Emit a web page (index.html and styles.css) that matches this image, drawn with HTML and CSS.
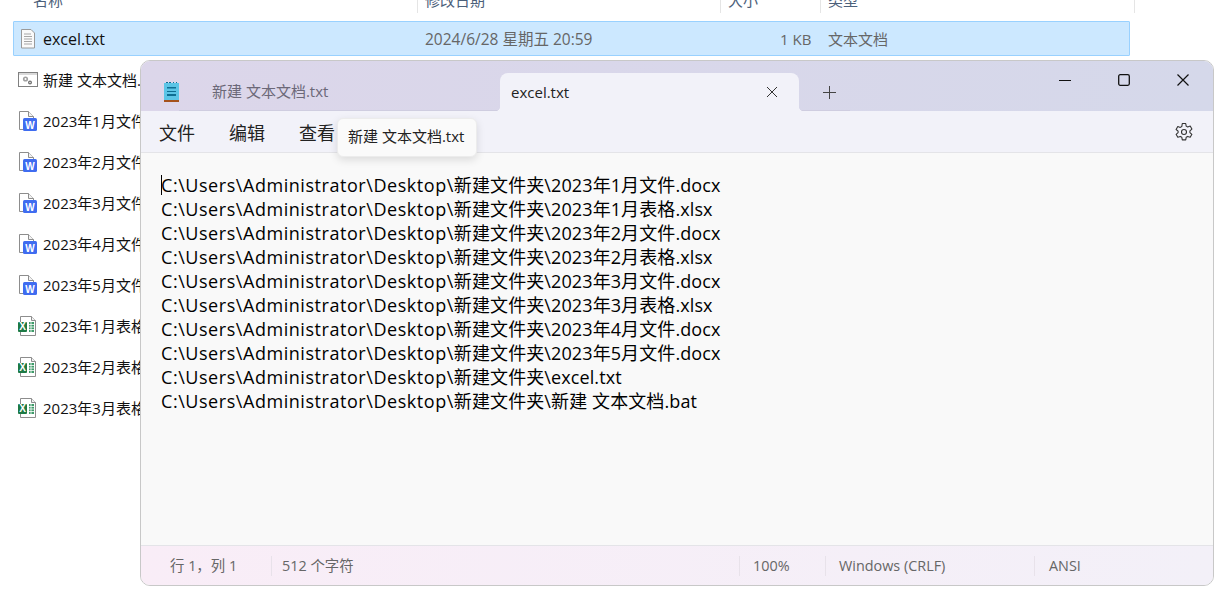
FILE: index.html
```html
<!DOCTYPE html>
<html lang="zh-CN">
<head>
<meta charset="utf-8">
<title>excel.txt</title>
<link rel="stylesheet" href="styles.css">
</head>
<body>
<svg class="defs" width="0" height="0" aria-hidden="true">
  <symbol id="word" viewBox="0 0 20 20">
    <path d="M1.500.5h9l5 5v13h-14z" fill="#fff" stroke="#8d8d8d"/>
    <path d="M10.500.5v5h5" fill="#f2f2f2" stroke="#8d8d8d"/>
    <rect x="5" y="7" width="14" height="13" rx="1.500" fill="#3f6cf0"/>
    <text x="12" y="17.500" class="badge-w">W</text>
  </symbol>
  <symbol id="excel" viewBox="0 0 20 20">
    <path d="M2.500.5h11l4 4v15h-15z" fill="#fff" stroke="#8d8d8d"/>
    <path d="M13.500.5v4h4" fill="#f2f2f2" stroke="#8d8d8d"/>
    <rect x="11" y="6" width="5" height="10" fill="#3d9a68"/>
    <path d="M11 8.500h5M11 11h5M11 13.500h5M13 6v10" stroke="#fff" stroke-width=".8"/>
    <rect x="0" y="6" width="9" height="10" rx="1" fill="#1d7a45"/>
    <text x="4.500" y="14" class="badge-x">X</text>
  </symbol>
</svg>

<main class="explorer">
  <div class="col-head">
    <div class="col col-name">名称</div>
    <div class="col col-date">修改日期</div>
    <div class="col col-size">大小</div>
    <div class="col col-type">类型</div>
  </div>
  <div class="selected-row">
    <svg class="icon-file" viewBox="0 0 16 20" width="16" height="20">
      <path d="M1.500.5h9.500l3.500 3.500v15h-13z" fill="#fafafa" stroke="#9a9a9a"/>
      <path d="M4 5h7M4 7.500h8M4 10h8M4 12.500h8M4 15h8" stroke="#a6a6a6"/>
    </svg>
    <span class="sel-name">excel.txt</span>
    <span class="sel-date">2024/6/28 星期五 20:59</span>
    <span class="sel-size">1 KB</span>
    <span class="sel-type">文本文档</span>
  </div>
  <ul class="files">
    <li class="file">
      <svg class="icon" viewBox="0 0 20 16" width="20" height="16">
        <rect x=".5" y=".5" width="19" height="14" fill="#fff" stroke="#808080"/>
        <rect x="1" y="1" width="18" height="2" fill="#d9d9d9"/>
        <circle cx="7.500" cy="7" r="2.600" fill="#a0a0a0"/>
        <circle cx="7.500" cy="7" r="1" fill="#fff"/>
        <circle cx="12" cy="10.500" r="2" fill="#6f6f6f"/>
        <circle cx="12" cy="10.500" r=".7" fill="#fff"/>
      </svg>
      <span>新建 文本文档.bat</span>
    </li>
    <li class="file"><svg class="icon" width="20" height="20"><use href="#word"/></svg><span>2023年1月文件.docx</span></li>
    <li class="file"><svg class="icon" width="20" height="20"><use href="#word"/></svg><span>2023年2月文件.docx</span></li>
    <li class="file"><svg class="icon" width="20" height="20"><use href="#word"/></svg><span>2023年3月文件.docx</span></li>
    <li class="file"><svg class="icon" width="20" height="20"><use href="#word"/></svg><span>2023年4月文件.docx</span></li>
    <li class="file"><svg class="icon" width="20" height="20"><use href="#word"/></svg><span>2023年5月文件.docx</span></li>
    <li class="file"><svg class="icon" width="20" height="20"><use href="#excel"/></svg><span>2023年1月表格.xlsx</span></li>
    <li class="file"><svg class="icon" width="20" height="20"><use href="#excel"/></svg><span>2023年2月表格.xlsx</span></li>
    <li class="file"><svg class="icon" width="20" height="20"><use href="#excel"/></svg><span>2023年3月表格.xlsx</span></li>
  </ul>
</main>

<section class="notepad">
  <header class="titlebar">
    <svg class="app-icon" viewBox="0 0 16 20" width="16" height="20">
      <rect x="1" y="1" width="15" height="17" fill="#5cc5e6"/>
      <rect x="1" y="18" width="15" height="2" fill="#a5521c"/>
      <path d="M3 1V0h2v1zM6 1V0h2v1zM10 1V0h1v1zM13 1V0h1v1z" fill="#0f6f93"/>
      <path d="M4 5h9v1.500H4zM4 9h9v1H4zM4 12h9v2H4z" fill="#0f6f93"/>
    </svg>
    <div class="tab tab-idle">新建 文本文档.txt</div>
    <div class="tab tab-active">
      <span>excel.txt</span>
      <svg viewBox="0 0 12 12" width="12" height="12"><path d="M1 1l10 10M11 1L1 11" stroke="#333" fill="none"/></svg>
    </div>
    <div class="tab-add">
      <svg viewBox="0 0 13 13" width="13" height="13"><path d="M6.500 0v13M0 6.500h13" stroke="#444" fill="none"/></svg>
    </div>
    <div class="win-controls">
      <svg viewBox="0 0 12 12" width="12" height="12"><path d="M0 6.500h12" stroke="#111" stroke-width="1.200" fill="none"/></svg>
      <svg viewBox="0 0 12 12" width="12" height="12"><rect x=".7" y=".7" width="10.600" height="10.600" rx="1.500" stroke="#111" stroke-width="1.300" fill="none"/></svg>
      <svg viewBox="0 0 12 12" width="12" height="12"><path d="M.5.500l11 11M11.500.5l-11 11" stroke="#111" stroke-width="1.200" fill="none"/></svg>
    </div>
  </header>

  <nav class="menubar">
    <span class="menu-item">文件</span>
    <span class="menu-item">编辑</span>
    <span class="menu-item">查看</span>
    <svg class="gear" viewBox="0 0 20 20" width="20" height="20">
      <path d="M8.300 1.500h3.400l.5 2.600 1.500.9 2.500-.9 1.700 3-2 1.700v1.800l2 1.700-1.700 3-2.500-.9-1.500.9-.5 2.600H8.300l-.5-2.600-1.500-.9-2.500.9-1.700-3 2-1.700V9.200l-2-1.700 1.700-3 2.500.9 1.500-.9z" fill="none" stroke="#333" stroke-width="1.100" stroke-linejoin="round"/>
      <circle cx="10" cy="10" r="2.500" fill="none" stroke="#333" stroke-width="1.100"/>
    </svg>
  </nav>
  <div class="tooltip">新建 文本文档.txt</div>

  <div class="editor">
    <div class="line caret-line"><span class="path">C:\Users\Administrator\Desktop\</span>新建文件夹\2023年1月文件.docx</div>
    <div class="line"><span class="path">C:\Users\Administrator\Desktop\</span>新建文件夹\2023年1月表格.xlsx</div>
    <div class="line"><span class="path">C:\Users\Administrator\Desktop\</span>新建文件夹\2023年2月文件.docx</div>
    <div class="line"><span class="path">C:\Users\Administrator\Desktop\</span>新建文件夹\2023年2月表格.xlsx</div>
    <div class="line"><span class="path">C:\Users\Administrator\Desktop\</span>新建文件夹\2023年3月文件.docx</div>
    <div class="line"><span class="path">C:\Users\Administrator\Desktop\</span>新建文件夹\2023年3月表格.xlsx</div>
    <div class="line"><span class="path">C:\Users\Administrator\Desktop\</span>新建文件夹\2023年4月文件.docx</div>
    <div class="line"><span class="path">C:\Users\Administrator\Desktop\</span>新建文件夹\2023年5月文件.docx</div>
    <div class="line"><span class="path">C:\Users\Administrator\Desktop\</span>新建文件夹\excel.txt</div>
    <div class="line"><span class="path">C:\Users\Administrator\Desktop\</span>新建文件夹\新建 文本文档.bat</div>
  </div>

  <footer class="statusbar">
    <div class="st st-pos">行 1，列 1</div>
    <div class="st st-count">512 个字符</div>
    <div class="st st-zoom">100%</div>
    <div class="st st-eol">Windows (CRLF)</div>
    <div class="st st-enc">ANSI</div>
  </footer>
</section>
</body>
</html>
```

FILE: styles.css
```css
* { box-sizing: border-box; }
html, body {
  margin: 0;
  height: 604px;
  overflow: hidden;
  background: #fff;
}
body {
  font-family: "Open Sans", "Noto Sans CJK SC", sans-serif;
  color: #111;
  position: relative;
}
.defs { position: absolute; }
.badge-w, .badge-x {
  font: 700 10px "Liberation Sans", sans-serif;
  fill: #fff;
  text-anchor: middle;
}

/* explorer behind */
.explorer { padding-left: 13px; }
.col-head {
  display: flex;
  height: 13px;
  width: 1122px;
  font-size: 15px;
  color: #4c607a;
  overflow: hidden;
}
.col {
  height: 13px;
  border-right: 1px solid #e5e5e5;
  line-height: 0;
  overflow: hidden;
}
.col-name { width: 405px; padding-left: 20px; }
.col-date { width: 303px; padding-left: 7px; }
.col-size { width: 100px; padding-left: 7px; }
.col-type { width: 314px; padding-left: 7px; }

.selected-row {
  display: flex;
  align-items: center;
  width: 1117px;
  height: 35px;
  margin-top: 8px;
  background: #cce8ff;
  border: 1px solid #99d1ff;
  border-radius: 1px;
  font-size: 15.500px;
  color: #666;
  white-space: nowrap;
}
.icon-file { margin-left: 6px; flex: none; }
.sel-name { width: 382px; margin-left: 7px; font-size: 16px; color: #111; }
.sel-date { width: 355px; }
.sel-size { width: 48px; font-size: 15px; }
.sel-type { font-size: 15px; }

.files {
  list-style: none;
  margin: 3px 0 0;
  padding: 0;
}
.file {
  display: flex;
  align-items: center;
  gap: 5px;
  height: 41px;
  padding-left: 5px;
  font-size: 15px;
  white-space: nowrap;
}
.icon { flex: none; }

/* notepad window */
.notepad {
  position: absolute;
  left: 140px;
  top: 60px;
  width: 1074px;
  height: 526px;
  display: flex;
  flex-direction: column;
  border: 1px solid #c8c8c8;
  border-radius: 10px;
  overflow: hidden;
  background: #f9f9f9;
}
.titlebar {
  display: flex;
  align-items: flex-end;
  height: 50px;
  flex: none;
  background: linear-gradient(90deg, #dcd6ea, #d5d8ea);
}
.app-icon { align-self: flex-start; margin: 21px 0 0 22px; flex: none; }
.tab {
  height: 38px;
  display: flex;
  align-items: center;
  font-size: 15px;
}
.tab-idle {
  width: 321px;
  padding: 0 0 2px 33px;
  color: #6b6878;
  border-bottom: 1px solid #cfcde0;
}
.tab-active {
  position: relative;
  width: 299px;
  justify-content: space-between;
  padding: 0 21px 0 11px;
  background: #f2f2f9;
  color: #222;
  border-radius: 8px 8px 0 0;
}
.tab-active::before,
.tab-active::after {
  content: "";
  position: absolute;
  bottom: 0;
  width: 5px;
  height: 5px;
}
.tab-active::before {
  left: -5px;
  background: radial-gradient(circle at 0 0, transparent 5px, #f2f2f9 5.500px);
}
.tab-active::after {
  right: -5px;
  background: radial-gradient(circle at 100% 0, transparent 5px, #f2f2f9 5.500px);
}
.tab-add {
  height: 38px;
  width: 51px;
  display: flex;
  align-items: center;
  padding: 2px 0 0 24px;
  border-bottom: 1px solid #cfcde0;
}
.win-controls {
  margin-left: auto;
  align-self: flex-start;
  display: flex;
  gap: 47px;
  padding: 13px 24px 0 0;
}
.menubar {
  display: flex;
  align-items: center;
  height: 42px;
  flex: none;
  padding: 0 19px 0 18px;
  background: #f2f2f9;
  border-bottom: 1px solid #e4e4e8;
  gap: 34px;
}
.menu-item { font-size: 18px; color: #222; }
.gear { margin-left: auto; }
.tooltip {
  position: absolute;
  left: 196px;
  top: 57px;
  height: 39px;
  width: 140px;
  display: flex;
  align-items: center;
  padding: 0 0 5px 10px;
  font-size: 15px;
  color: #222;
  background: #fafafa;
  border: 1px solid #ececec;
  border-radius: 6px;
  box-shadow: 0 3px 8px rgba(0, 0, 0, .12);
  white-space: nowrap;
}
.editor {
  flex: 1;
  padding: 20px 0 0 20px;
  font-size: 18px;
  line-height: 24px;
  letter-spacing: .1px;
  color: #000;
  background: #f9f9f9;
  white-space: nowrap;
}
.path { letter-spacing: .55px; }
.caret-line { position: relative; }
.caret-line::before {
  content: "";
  position: absolute;
  left: 0;
  top: 2px;
  width: 1px;
  height: 20px;
  background: #000;
}
.statusbar {
  display: flex;
  align-items: center;
  height: 40px;
  flex: none;
  font-size: 14.400px;
  color: #666;
  background: linear-gradient(90deg, #f9edf7, #f3f0f8);
  border-top: 1px solid #e4e4e8;
}
.st {
  height: 20px;
  line-height: 20px;
  white-space: nowrap;
  border-left: 1px solid #e8e2ea;
}
.st-pos { width: 130px; border-left: 0; padding-left: 29px; }
.st-count { width: 468px; padding-left: 10px; }
.st-zoom { width: 86px; padding-left: 13px; }
.st-eol { width: 209px; padding-left: 13px; }
.st-enc { padding-left: 14px; }
```
